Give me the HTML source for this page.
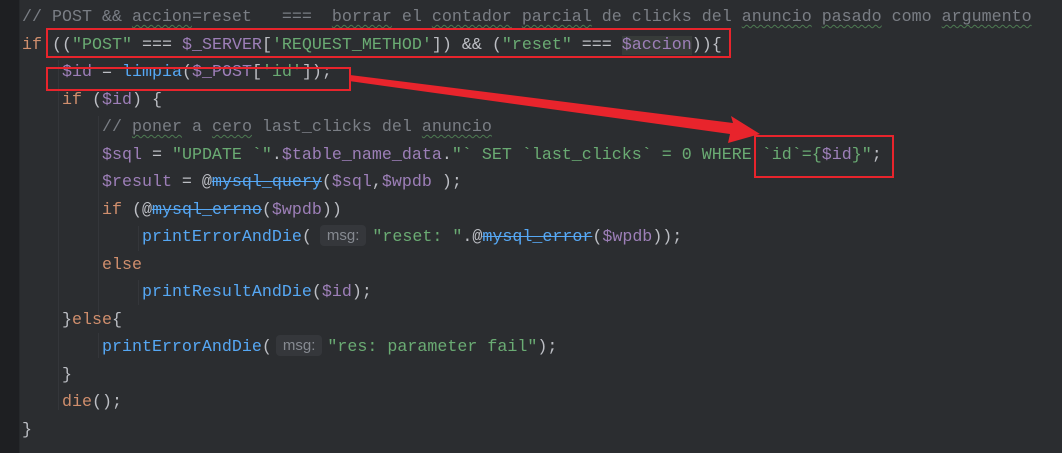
<!DOCTYPE html>
<html><head><meta charset="utf-8"><style>
html,body{margin:0;padding:0;}
body{width:1062px;height:453px;background:#2b2d30;overflow:hidden;position:relative;font-family:"Liberation Mono",monospace;font-size:16.67px;color:#bcbec4;}
.gut{position:absolute;left:0;top:0;width:19px;height:453px;background:#1e1f22;}
.gl{position:absolute;left:19px;top:0;width:1px;height:453px;background:#26282b;}
.l{position:absolute;left:22px;height:27.5px;line-height:27.5px;white-space:pre;}
.c{color:#7a7e85}.k{color:#cf8e6d}.s{color:#6aab73}.v{color:#9d7fb8}.f{color:#56a8f5}
.u{text-decoration:underline wavy #4d7a52;text-decoration-thickness:1px;text-underline-offset:3px}
.x{text-decoration:line-through}
.h{display:inline-block;background:#35373b;color:#868a91;font-family:"Liberation Sans",sans-serif;font-size:15px;border-radius:4px;line-height:21px;padding:0 7px;margin:0 5px 0 4px;vertical-align:1px}
.ig{position:absolute;width:1px;background:#34363a;}
.box{position:absolute;border:2px solid #e8242c;box-sizing:border-box;}
.hl{background:#373b39}
</style></head><body>
<div class="gut"></div><div class="gl"></div>
<div class="ig" style="left:58px;top:60px;height:350px"></div>
<div class="ig" style="left:98px;top:116px;height:200px"></div>
<div class="ig" style="left:98px;top:333px;height:25px"></div>
<div class="ig" style="left:138px;top:226px;height:25px"></div>
<div class="ig" style="left:138px;top:280px;height:25px"></div>

<div class="l" style="top:4px"><span class="c">// POST &amp;&amp; <span class="u">accion</span>=reset   ===  <span class="u">borrar</span> el <span class="u">contador</span> <span class="u">parcial</span> de clicks del <span class="u">anuncio</span> <span class="u">pasado</span> como <span class="u">argumento</span></span></div>
<div class="l" style="top:32px"><span class="k">if</span> ((<span class="s">"POST"</span> === <span class="v">$_SERVER</span>[<span class="s">'REQUEST_METHOD'</span>]) &amp;&amp; (<span class="s">"reset"</span> === <span class="v hl">$accion</span>)){</div>
<div class="l" style="top:59px">    <span class="v">$id</span> = <span class="f">limpia</span>(<span class="v">$_POST</span>[<span class="s">'id'</span>]);</div>
<div class="l" style="top:87px">    <span class="k">if</span> (<span class="v">$id</span>) {</div>
<div class="l" style="top:114px">        <span class="c">// <span class="u">poner</span> a <span class="u">cero</span> last_clicks del <span class="u">anuncio</span></span></div>
<div class="l" style="top:142px">        <span class="v">$sql</span> = <span class="s">"UPDATE `"</span>.<span class="v">$table_name_data</span>.<span class="s">"` SET `last_clicks` = 0 WHERE `id`={<span class="v">$id</span>}"</span>;</div>
<div class="l" style="top:169px">        <span class="v">$result</span> = @<span class="f x">mysql_query</span>(<span class="v">$sql</span>,<span class="v">$wpdb</span> );</div>
<div class="l" style="top:197px">        <span class="k">if</span> (@<span class="f x">mysql_errno</span>(<span class="v">$wpdb</span>))</div>
<div class="l" style="top:224px">            <span class="f">printErrorAndDie</span>(<span class="h" style="margin-left:8px;margin-right:6px">msg:</span><span class="s">"reset: "</span>.@<span class="f x">mysql_error</span>(<span class="v">$wpdb</span>));</div>
<div class="l" style="top:252px">        <span class="k">else</span></div>
<div class="l" style="top:279px">            <span class="f">printResultAndDie</span>(<span class="v">$id</span>);</div>
<div class="l" style="top:307px">    }<span class="k">else</span>{</div>
<div class="l" style="top:334px">        <span class="f">printErrorAndDie</span>(<span class="h">msg:</span><span class="s">"res: parameter fail"</span>);</div>
<div class="l" style="top:362px">    }</div>
<div class="l" style="top:389px">    <span class="k">die</span>();</div>
<div class="l" style="top:417px">}</div>

<div class="box" style="left:46px;top:28px;width:685px;height:30px"></div>
<div class="box" style="left:46px;top:67px;width:305px;height:24px"></div>
<div class="box" style="left:754px;top:135px;width:140px;height:43px"></div>
<svg style="position:absolute;left:0;top:0" width="1062" height="453">
<polygon points="350,75 733,123 731,116 760,134 728,143 730,134 349,81" fill="#e8242c"/>
</svg>
</body></html>
